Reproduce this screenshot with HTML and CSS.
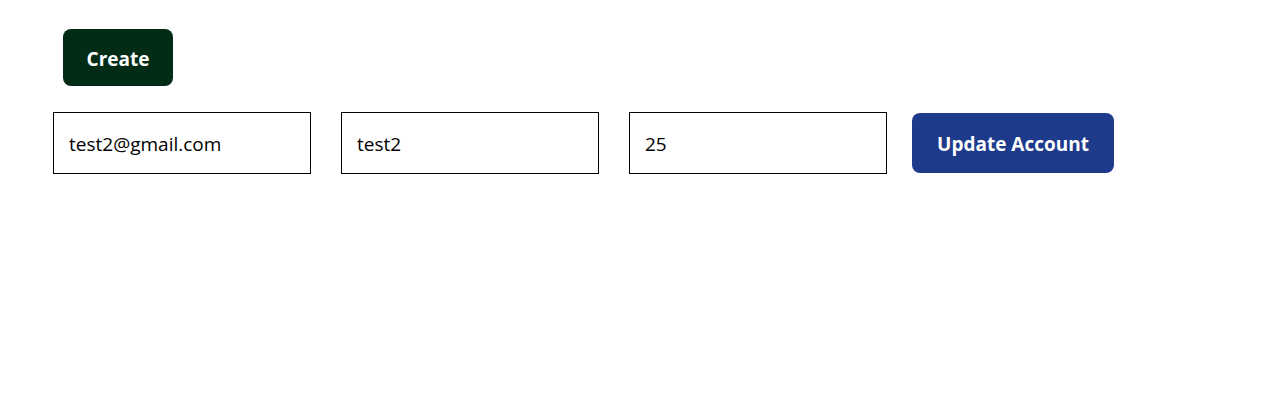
FILE: index.html
```html
<!DOCTYPE html>
<html>
<head>
<meta charset="utf-8">
<link rel="stylesheet" href="styles.css">
</head>
<body>
<div class="page">
  <div class="top">
    <button class="btn btn-create">Create</button>
  </div>
  <div class="form-row">
    <input class="field" type="text" value="test2@gmail.com">
    <input class="field" type="text" value="test2">
    <input class="field" type="text" value="25">
    <button class="btn btn-update">Update Account</button>
  </div>
</div>
</body>
</html>
```
FILE: styles.css
```css
html, body {
  margin: 0;
  padding: 0;
  background: #ffffff;
}
.page {
  font-family: "Open Sans", "Noto Sans", sans-serif;
  padding: 29px 0 0 53px;
}
.top {
  padding-left: 10px;
}
.btn {
  font-family: "Open Sans", "Noto Sans", sans-serif;
  font-weight: 700;
  font-size: 19px;
  color: #ffffff;
  border: none;
  border-radius: 8px;
  cursor: pointer;
  padding: 2px 0 0;
}
.btn-create {
  width: 110px;
  height: 57px;
  background: #022c15;
}
.form-row {
  display: flex;
  align-items: center;
  margin-top: 26px;
}
.field {
  box-sizing: border-box;
  width: 258px;
  height: 62px;
  border: 1px solid #000000;
  border-radius: 0;
  padding: 2px 15px 0;
  font-family: "Open Sans", "Noto Sans", sans-serif;
  font-size: 19px;
  color: #000000;
  margin-right: 30px;
  outline: none;
}
.field:nth-of-type(3) {
  margin-right: 25px;
}
.btn-update {
  width: 202px;
  height: 60px;
  background: #1e3a8a;
}
```
